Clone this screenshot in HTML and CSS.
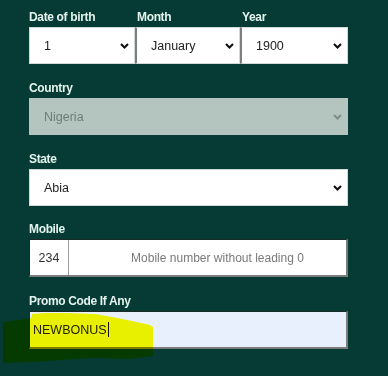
FILE: index.html
```html
<!DOCTYPE html>
<html lang="en">
<head>
<meta charset="utf-8">
<title>Register</title>
<link rel="stylesheet" href="styles.css">
</head>
<body>
<form class="form">
  <div class="dob">
    <div class="dob-col">
      <div class="label">Date of birth</div>
      <div class="select">
        <span>1</span>
        <svg class="chev" width="9" height="6" viewBox="0 0 9 6"><path d="M1 1 L4.5 4.5 L8 1" /></svg>
      </div>
    </div>
    <div class="dob-col">
      <div class="label">Month</div>
      <div class="select sep">
        <span>January</span>
        <svg class="chev" width="9" height="6" viewBox="0 0 9 6"><path d="M1 1 L4.5 4.5 L8 1" /></svg>
      </div>
    </div>
    <div class="dob-col">
      <div class="label">Year</div>
      <div class="select sep">
        <span>1900</span>
        <svg class="chev" width="9" height="6" viewBox="0 0 9 6"><path d="M1 1 L4.5 4.5 L8 1" /></svg>
      </div>
    </div>
  </div>

  <div class="group">
    <div class="label">Country</div>
    <div class="select disabled">
      <span>Nigeria</span>
      <svg class="chev" width="9" height="6" viewBox="0 0 9 6"><path d="M1 1 L4.5 4.5 L8 1" /></svg>
    </div>
  </div>

  <div class="group">
    <div class="label">State</div>
    <div class="select">
      <span>Abia</span>
      <svg class="chev" width="9" height="6" viewBox="0 0 9 6"><path d="M1 1 L4.5 4.5 L8 1" /></svg>
    </div>
  </div>

  <div class="group tight">
    <div class="label">Mobile</div>
    <div class="input mobile">
      <span class="prefix">234</span>
      <span class="placeholder">Mobile number without leading 0</span>
    </div>
  </div>

  <div class="group">
    <div class="label">Promo Code If Any</div>
    <div class="input promo"><span class="value">NEWBONUS</span><span class="caret"></span></div>
  </div>
</form>

<svg class="highlight" width="388" height="376" viewBox="0 0 388 376">
  <path d="M3 322 L18 320 L31 318 L32 314 L45 313 L67 313 L95 314 L112 317 L132 321 L150 325 L153 327 L153 356 L130 359 L95 358 L60 360 L35 362 L3 363 Z" />
</svg>
</body>
</html>
```

FILE: styles.css
```css
* { box-sizing: border-box; }

html, body {
  margin: 0;
  background: #053b34;
}

body {
  padding: 10px 0 0 29px;
  font-family: "Liberation Sans", Arial, sans-serif;
  width: 388px;
  height: 376px;
  overflow: hidden;
}

.form {
  width: 319px;
  display: flex;
  flex-direction: column;
  gap: 17px;
}

.group.tight {
  margin-top: -1px;
}

.label {
  font-weight: bold;
  font-size: 12px;
  letter-spacing: -0.35px;
  line-height: 14px;
  color: #e4f2ed;
  margin-bottom: 3px;
}

.dob {
  display: grid;
  grid-template-columns: 106px 105px 108px;
}

.select {
  height: 37px;
  background: #ffffff;
  border: 1px solid #d3d9d7;
  display: flex;
  align-items: center;
  justify-content: space-between;
  padding: 0 5px 0 14px;
  font-size: 12.5px;
  color: #222;
}

.select.sep {
  border-left: 2px solid #7b807e;
}

.dob-col:nth-child(2) .label,
.dob-col:nth-child(3) .label {
  padding-left: 2px;
}

.chev path {
  fill: none;
  stroke: #111;
  stroke-width: 2.1;
  stroke-linecap: butt;
  stroke-linejoin: miter;
}

.select.disabled {
  background: #b4c5c0;
  border-color: #b4c5c0;
  color: #6d7c77;
}

.select.disabled .chev path {
  stroke: #7e8f8a;
}

.input {
  height: 38px;
  border-top: 1px solid #1b2a26;
  border-left: 1px solid #1b2a26;
  border-right: 2px solid #7a7c7c;
  border-bottom: 2px solid #7a7c7c;
  display: flex;
  align-items: center;
  font-size: 12.5px;
}

.mobile {
  background: #ffffff;
}

.prefix {
  width: 39px;
  align-self: stretch;
  display: flex;
  align-items: center;
  justify-content: center;
  border-right: 1px solid #9a9a9a;
  color: #333;
}

.placeholder {
  flex: 1;
  text-align: center;
  padding-left: 20px;
  font-size: 12px;
  color: #7a7a7a;
}

.promo {
  background: #e8f0fe;
  padding-left: 3px;
  color: #222;
}

.caret {
  display: inline-block;
  width: 1px;
  height: 15px;
  background: #111;
  margin-left: 1px;
}

.highlight {
  position: absolute;
  top: 0;
  left: 0;
  pointer-events: none;
  mix-blend-mode: multiply;
}

.highlight path {
  fill: #ffff00;
}
```
